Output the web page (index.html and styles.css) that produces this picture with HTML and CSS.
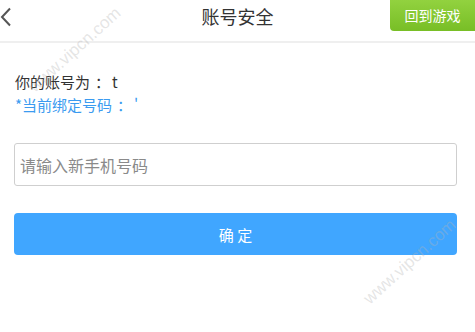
FILE: index.html
```html
<!DOCTYPE html>
<html lang="zh-CN">
<head>
<meta charset="utf-8">
<title>账号安全</title>
<link rel="stylesheet" href="styles.css">
</head>
<body>
<div class="page">
  <header class="header">
    <div class="back">
      <svg width="12" height="20" viewBox="0 0 12 20"><path d="M10 1.5 L2 10 L10 18.5" fill="none" stroke="#555" stroke-width="2"/></svg>
    </div>
    <h1 class="title">账号安全</h1>
    <a class="game-btn">回到游戏</a>
  </header>
  <section class="info">
    <p class="account">你的账号为<span class="colon">：</span>t</p>
    <p class="bound">*当前绑定号码<span class="colon">：</span>'</p>
  </section>
  <div class="field">
    <input class="phone" type="text" placeholder="请输入新手机号码">
  </div>
  <button class="confirm">确 定</button>
  <div class="wm wm1">www.vipcn.com</div>
  <div class="wm wm2">www.vipcn.com</div>
</div>
</body>
</html>
```
FILE: styles.css
```css
* { box-sizing: border-box; }
html, body { margin: 0; padding: 0; background: #fff; }
body {
  font-family: "Noto Sans CJK SC", "Noto Sans", sans-serif;
  width: 475px;
  height: 332px;
  overflow: hidden;
}
.page { position: relative; width: 475px; height: 332px; }
.header {
  height: 43px;
  border-bottom: 2px solid #efefef;
  display: flex;
  align-items: flex-start;
  justify-content: space-between;
  position: relative;
}
.back { width: 60px; padding-top: 7px; padding-left: 0; }
.title {
  position: absolute;
  left: 0; right: 0; top: 2px;
  margin: 0;
  text-align: center;
  font-size: 18px;
  font-weight: normal;
  color: #333;
  line-height: 28px;
  pointer-events: none;
}
.game-btn {
  width: 85px;
  height: 31px;
  background: linear-gradient(#92d23f, #78be26);
  color: #fff;
  font-size: 14px;
  line-height: 31px;
  text-align: center;
  border-bottom-left-radius: 4px;
}
.info { padding: 27px 15px 0; }
.info p {
  margin: 0;
  font-family: "Noto Sans CJK SC", sans-serif;
  font-size: 15px;
  line-height: 23px;
}
.colon { padding-left: 5px; padding-right: 2px; }
.account { color: #333; }
.bound { color: #3b9bf0; }
.field { padding: 27px 18px 0 14px; }
.phone {
  display: block;
  width: 100%;
  height: 43px;
  border: 1px solid #cfcfcf;
  border-radius: 3px;
  padding: 0 5px;
  font-family: "Noto Sans CJK SC", "Noto Sans", sans-serif;
  font-size: 16px;
  color: #333;
  outline: none;
}
.phone::placeholder { color: #8a8a8a; }
.confirm {
  display: block;
  margin: 27px 0 0 14px;
  width: 443px;
  height: 42px;
  border: none;
  border-radius: 4px;
  background: #40a6ff;
  color: #fff;
  font-family: "Noto Sans CJK SC", "Noto Sans", sans-serif;
  font-size: 15px;
  padding-top: 2px;
}
.wm {
  position: absolute;
  width: 130px;
  text-align: center;
  font-family: "Liberation Sans", sans-serif;
  font-size: 17px;
  line-height: 20px;
  color: rgba(180,180,180,0.35);
  transform: rotate(-42deg);
  pointer-events: none;
  white-space: nowrap;
}
.wm1 { left: 10px; top: 40px; }
.wm2 { left: 345px; top: 252px; }
```
